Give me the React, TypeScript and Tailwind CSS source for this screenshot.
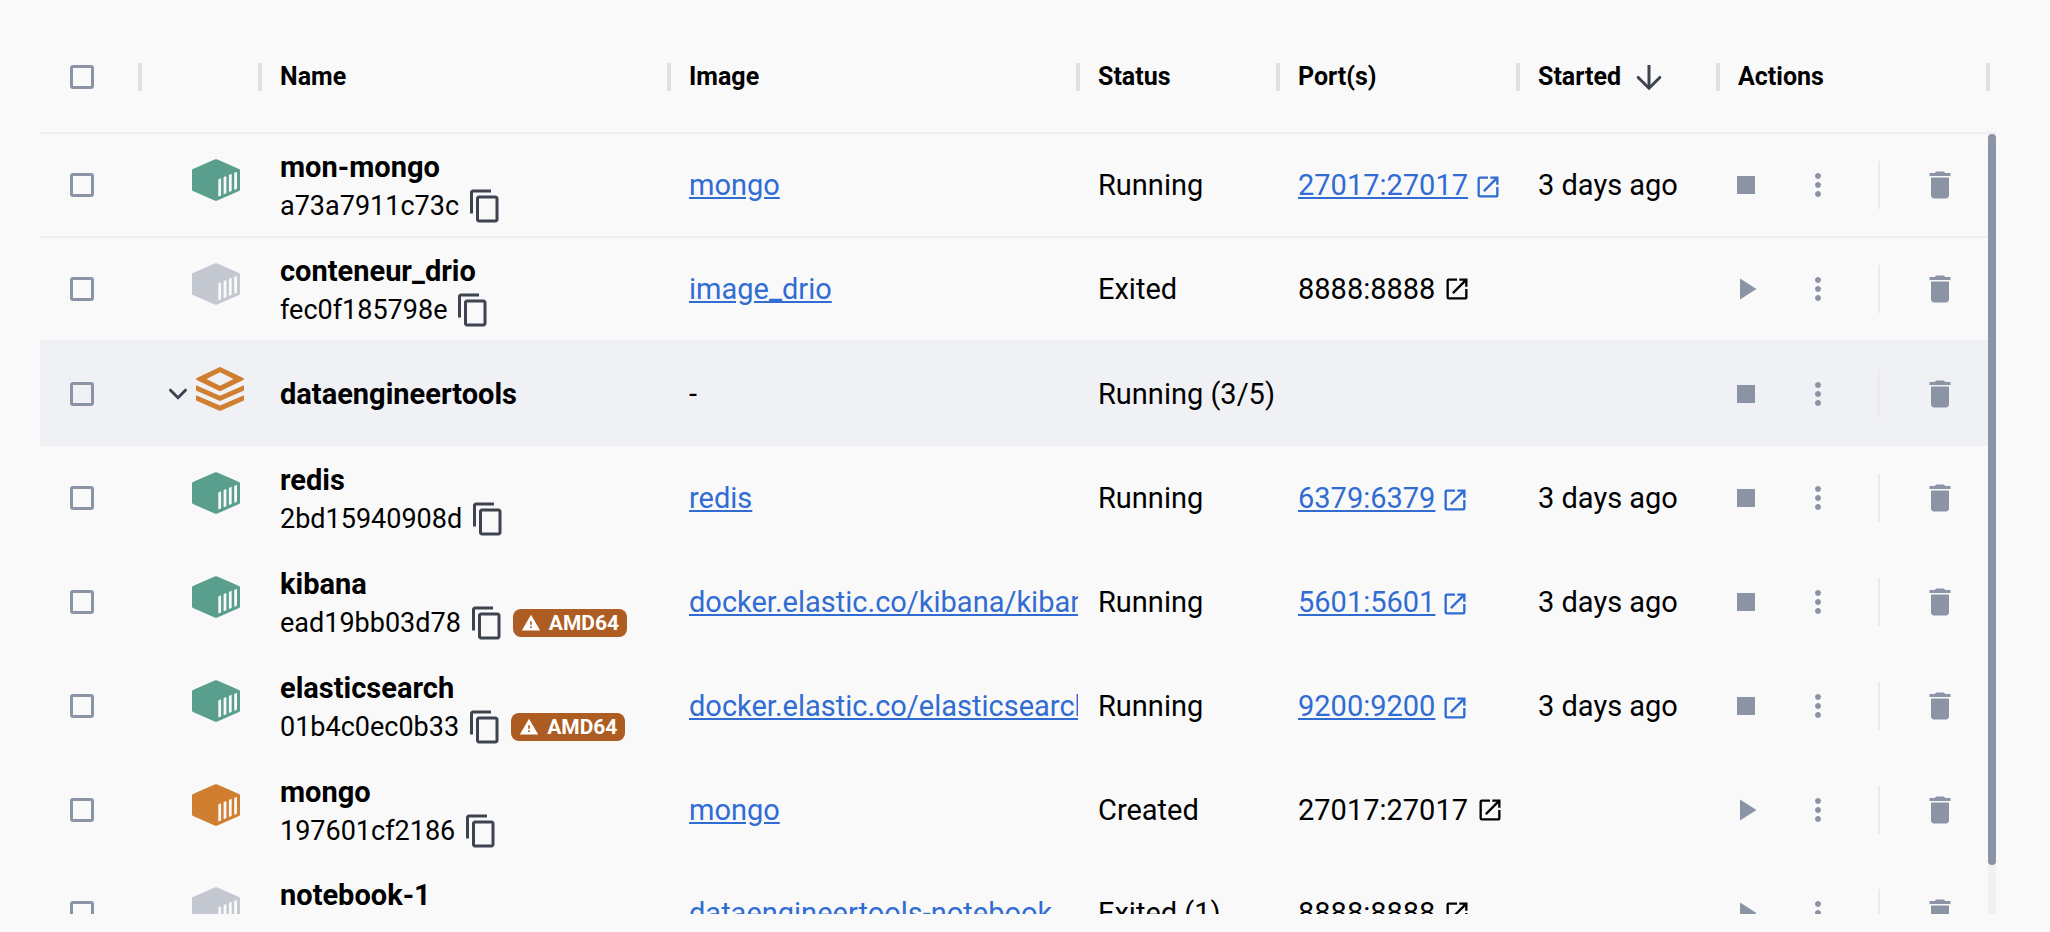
import { useEffect, useRef, useState } from "react";
import {
  MdContentCopy,
  MdDelete,
  MdMoreVert,
  MdOpenInNew,
  MdPlayArrow,
  MdStop,
  MdWarning,
} from "react-icons/md";

type Tone = "running" | "exited" | "created";

type Row = {
  name: string;
  id?: string;
  tone?: Tone;
  amd64?: boolean;
  image?: string;
  status: string;
  port?: string;
  started?: string;
  active: boolean;
  divided?: boolean;
};

const rows: Row[] = [
  { name: "mon-mongo", id: "a73a7911c73c", tone: "running", image: "mongo", status: "Running", port: "27017:27017", started: "3 days ago", active: true, divided: true },
  { name: "conteneur_drio", id: "fec0f185798e", tone: "exited", image: "image_drio", status: "Exited", port: "8888:8888", active: false, divided: true },
  { name: "dataengineertools", status: "Running (3/5)", active: true },
  { name: "redis", id: "2bd15940908d", tone: "running", image: "redis", status: "Running", port: "6379:6379", started: "3 days ago", active: true },
  { name: "kibana", id: "ead19bb03d78", tone: "running", amd64: true, image: "docker.elastic.co/kibana/kibana", status: "Running", port: "5601:5601", started: "3 days ago", active: true },
  { name: "elasticsearch", id: "01b4c0ec0b33", tone: "running", amd64: true, image: "docker.elastic.co/elasticsearch", status: "Running", port: "9200:9200", started: "3 days ago", active: true },
  { name: "mongo", id: "197601cf2186", tone: "created", image: "mongo", status: "Created", port: "27017:27017", active: false },
  { name: "notebook-1", id: "5c1e07a9d2b4", tone: "exited", image: "dataengineertools-notebook", status: "Exited (1)", port: "8888:8888", active: false, divided: true },
];

const toneClass: Record<Tone, string> = {
  running: "text-[#5a9f8e]",
  exited: "text-[#c4c8d1]",
  created: "text-[#d07f30]",
};

function ContainerIcon({ tone }: { tone: Tone }) {
  return (
    <svg viewBox="0 0 48 42" className={`h-[42px] w-12 ${toneClass[tone]}`} aria-hidden="true">
      <path
        d="M22.6.5a3.4 3.4 0 0 1 2.8 0L47 9.9a1.7 1.7 0 0 1 1 1.5v19.2a1.7 1.7 0 0 1-1 1.5l-21.6 9.4a3.4 3.4 0 0 1-2.8 0L1 32.1a1.7 1.7 0 0 1-1-1.5V11.4a1.7 1.7 0 0 1 1-1.5z"
        fill="currentColor"
      />
      <g fill="#f9f9fa">
        <path d="M26.3 21q0-.7.7-1l1.4-.5q.7-.2.7.6v15.6q0 .7-.6 1l-1.5.6q-.7.2-.7-.6z" />
        <path d="M31.6 18.8q0-.7.7-1l1.4-.5q.7-.2.7.6v15.6q0 .7-.6 1l-1.5.6q-.7.2-.7-.6z" />
        <path d="M36.9 16.6q0-.7.7-1l1.4-.5q.7-.2.7.6v15.5q0 .7-.6 1l-1.5.6q-.7.2-.7-.6z" />
        <path d="M42.2 14.6q0-.7.7-1l1.4-.5q.7-.2.7.6v15.4q0 .7-.6 1l-1.5.6q-.7.2-.7-.6z" />
      </g>
    </svg>
  );
}

function StackIcon() {
  return (
    <svg viewBox="0 0 48 44" className="h-11 w-12 text-[#d07f30]" fill="currentColor" aria-hidden="true">
      <path
        fillRule="evenodd"
        d="M22.8.4a2.8 2.8 0 0 1 2.4 0L47.3 11a1.1 1.1 0 0 1 0 2L25.2 23.7a2.8 2.8 0 0 1-2.4 0L.7 13a1.1 1.1 0 0 1 0-2zM24 5.2 10.5 12 24 18.7 37.5 12z"
      />
      <path d="M0 18.3 24 28.8 48 18.3v5.2L25.2 33.6a2.8 2.8 0 0 1-2.4 0L0 23.5z" />
      <path d="M0 28.3 24 38.5 48 28.3v5.2L25.2 43.5a2.8 2.8 0 0 1-2.4 0L0 33.5z" />
    </svg>
  );
}

function Columns() {
  return (
    <colgroup>
      <col className="w-[100px]" />
      <col className="w-[120px]" />
      <col />
      <col />
      <col className="w-[200px]" />
      <col className="w-[240px]" />
      <col className="w-[200px]" />
      <col className="w-[270px]" />
    </colgroup>
  );
}

function Checkbox({ label }: { label: string }) {
  return (
    <input
      type="checkbox"
      aria-label={label}
      className="ml-[30px] block size-6 appearance-none rounded-[3px] border-[3px] border-[#8b94a5] checked:bg-[#8b94a5]"
    />
  );
}

function Header() {
  const labels = ["", "", "Name", "Image", "Status", "Port(s)", "Started", "Actions"];
  return (
    <div className="shrink-0 border-b-2 border-[#eeeff2] pr-2">
      <table className="w-full table-fixed text-[25px]">
        <Columns />
        <thead>
          <tr className="h-[110px]">
            {labels.map((label, i) => (
              <th key={i} className="relative p-0 text-left font-bold">
                {i === 0 && <Checkbox label="Select all containers" />}
                {label === "Started" ? (
                  <button className="ml-5 flex items-center gap-2.5 font-bold">
                    Started
                    <svg viewBox="0 0 24 24" className="size-9 text-[#3d434f]" fill="none" stroke="currentColor" strokeWidth="2" aria-hidden="true">
                      <path d="M12 4v15" />
                      <path d="m4.8 12.3 7.2 7.2 7.2-7.2" strokeLinecap="round" />
                    </svg>
                  </button>
                ) : (
                  label && <span className="ml-5">{label}</span>
                )}
                <span className="absolute -right-0.5 top-[41px] h-7 w-1 bg-[#e0e0e0]" />
              </th>
            ))}
          </tr>
        </thead>
      </table>
    </div>
  );
}

function ContainerRow({ row }: { row: Row }) {
  const border = row.divided ? "*:border-b-2 *:border-[#eeeff2]" : "";
  return (
    <tr className={`h-[104px] ${border} ${row.tone ? "" : "bg-[#f0f1f4]"}`}>
      <td className="p-0">
        <Checkbox label={`Select ${row.name}`} />
      </td>
      <td className="p-0">
        {row.tone ? (
          <div className="flex justify-end pr-5 pb-2.5">
            <ContainerIcon tone={row.tone} />
          </div>
        ) : (
          <div className="flex items-center justify-end gap-2 pr-4">
            <button aria-label="Collapse group" className="text-[#3d434f]">
              <svg viewBox="0 0 20 12" className="h-3 w-5" fill="none" stroke="currentColor" strokeWidth="3" strokeLinecap="round" aria-hidden="true">
                <path d="m2.5 2.2 7.5 7.5 7.5-7.5" />
              </svg>
            </button>
            <div className="pb-2.5">
              <StackIcon />
            </div>
          </div>
        )}
      </td>
      <td className="p-0 pl-5">
        {row.id ? (
          <div className="pt-1">
            <div className="font-bold leading-[38px]">{row.name}</div>
            <div className="flex items-center gap-2 text-[27px] leading-10">
              <span>{row.id}</span>
              <button aria-label="Copy container ID" className="text-[#3d434f]">
                <MdContentCopy className="size-9" />
              </button>
              {row.amd64 && (
                <span className="flex h-7 items-center gap-2 rounded-lg bg-[#ad5c22] px-2 text-[21px] font-bold text-white">
                  <MdWarning className="size-5" />
                  AMD64
                </span>
              )}
            </div>
          </div>
        ) : (
          <div className="font-bold">{row.name}</div>
        )}
      </td>
      <td className="p-0 pl-5">
        {row.image ? (
          <div className="overflow-hidden whitespace-nowrap">
            <a href="#" className="text-[#316cd3] underline">
              {row.image}
            </a>
          </div>
        ) : (
          "-"
        )}
      </td>
      <td className="p-0 pl-5 whitespace-nowrap">{row.status}</td>
      <td className="p-0 pl-5">
        {row.port &&
          (row.active ? (
            <a href="#" className="flex items-center gap-1.5 text-[#316cd3]">
              <span className="underline">{row.port}</span>
              <MdOpenInNew className="mt-1 size-7" />
            </a>
          ) : (
            <span className="flex items-center gap-2">
              {row.port}
              <MdOpenInNew className="size-7" />
            </span>
          ))}
      </td>
      <td className="p-0 pl-5">{row.started}</td>
      <td className="p-0 pl-2.5">
        <div className="flex items-center text-[#8b94a5]">
          <button aria-label={row.active ? "Stop" : "Start"}>
            {row.active ? <MdStop className="size-9" /> : <MdPlayArrow className="size-9" />}
          </button>
          <button aria-label="More actions" className="ml-9">
            <MdMoreVert className="size-9" />
          </button>
          <span className="mx-[42px] h-12 w-0.5 bg-[#ebebee]" />
          <button aria-label="Delete">
            <MdDelete className="size-9" />
          </button>
        </div>
      </td>
    </tr>
  );
}

export default function App() {
  const viewport = useRef<HTMLDivElement>(null);
  const [thumb, setThumb] = useState({ top: 0, height: 100 });

  const measure = () => {
    const el = viewport.current;
    if (!el) return;
    setThumb({
      top: (el.scrollTop / el.scrollHeight) * 100,
      height: (el.clientHeight / el.scrollHeight) * 100,
    });
  };

  useEffect(() => {
    measure();
    window.addEventListener("resize", measure);
    return () => window.removeEventListener("resize", measure);
  }, []);

  return (
    <main className="flex h-screen flex-col bg-[#f9f9fa] pt-[22px] pr-[54px] pb-[18px] pl-10 font-[Roboto,sans-serif] text-black">
      <Header />
      <div className="flex min-h-0 flex-1">
        <div ref={viewport} onScroll={measure} className="min-w-0 flex-1 overflow-x-hidden overflow-y-auto [scrollbar-width:none]">
          <table className="w-full table-fixed border-separate border-spacing-0 text-[29px] leading-10">
            <Columns />
            <tbody>
              {rows.map((row) => (
                <ContainerRow key={row.name} row={row} />
              ))}
            </tbody>
          </table>
        </div>
        <div className="relative w-2 shrink-0 bg-[#f1f1f1]">
          <div
            className="absolute w-2 rounded-full bg-[#8b94a5]"
            style={{ top: `${thumb.top}%`, height: `${thumb.height}%` }}
          />
        </div>
      </div>
    </main>
  );
}
